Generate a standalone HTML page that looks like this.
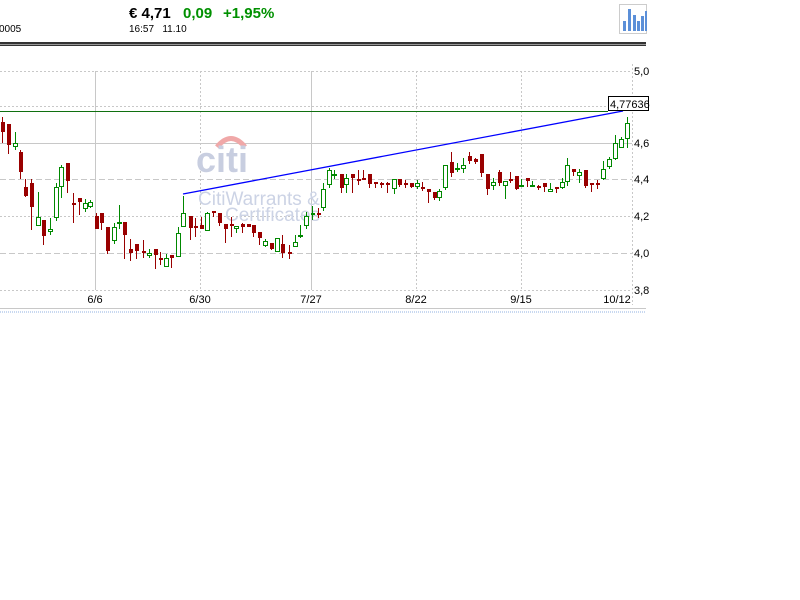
<!DOCTYPE html>
<html><head><meta charset="utf-8">
<style>
body{margin:0;width:800px;height:600px;background:#fff;overflow:hidden;font-family:"Liberation Sans",Arial,sans-serif;}
.t{position:absolute;white-space:nowrap;}
</style></head><body>
<div class="t" style="left:129px;top:5px;font-size:15px;font-weight:bold;color:#000">€ 4,71</div>
<div class="t" style="left:183px;top:5px;font-size:15px;font-weight:bold;color:#009000">0,09</div>
<div class="t" style="left:223px;top:5px;font-size:15px;font-weight:bold;color:#009000">+1,95%</div>
<div class="t" style="left:-1px;top:24px;font-size:10px;color:#000">0005</div>
<div class="t" style="left:129px;top:24px;font-size:10px;color:#000">16:57&nbsp;&nbsp;&nbsp;11.10</div>
<svg id="s" width="800" height="600" style="position:absolute;left:0;top:0" shape-rendering="crispEdges">
<rect x="0" y="42" width="646" height="2" fill="#333"/>
<rect x="0" y="44" width="646" height="1" fill="#999"/>
<rect x="0" y="45" width="646" height="1" fill="#333"/>
<rect x="619.5" y="4.5" width="27" height="29" fill="#fff" stroke="#ccc"/>
<g fill="#5b8fd8">
<rect x="623" y="21" width="3" height="10"/><rect x="628" y="9" width="3" height="22"/><rect x="633" y="15" width="3" height="16"/><rect x="637" y="21" width="3" height="10"/><rect x="641" y="16" width="3" height="15"/><rect x="645" y="11" width="2" height="20"/>
</g>
<g stroke="#c8c8c8" stroke-width="1" fill="none">
<line x1="0" y1="71.5" x2="632" y2="71.5" stroke-dasharray="2,2"/>
<line x1="0" y1="106.5" x2="632" y2="106.5" stroke-dasharray="2,2"/>
<line x1="0" y1="143.5" x2="632" y2="143.5"/>
<line x1="0" y1="179.5" x2="632" y2="179.5" stroke-dasharray="6,3"/>
<line x1="0" y1="216.5" x2="632" y2="216.5" stroke-dasharray="2,2"/>
<line x1="0" y1="253.5" x2="632" y2="253.5" stroke-dasharray="6,3"/>
<line x1="0" y1="290.5" x2="632" y2="290.5" stroke-dasharray="2,2"/>
<line x1="95.5" y1="71" x2="95.5" y2="290"/>
<line x1="200.5" y1="71" x2="200.5" y2="290" stroke-dasharray="2,2"/>
<line x1="311.5" y1="71" x2="311.5" y2="290"/>
<line x1="416.5" y1="71" x2="416.5" y2="290" stroke-dasharray="2,2"/>
<line x1="521.5" y1="71" x2="521.5" y2="290" stroke-dasharray="2,2"/>
<line x1="632.5" y1="64" x2="632.5" y2="305" stroke-dasharray="2,2"/>
<line x1="0" y1="308.5" x2="646" y2="308.5" stroke="#c8c8c8"/>
<line x1="0" y1="311.5" x2="646" y2="311.5" stroke="#c8d8f0" stroke-dasharray="1,1"/>
<line x1="0" y1="312.5" x2="646" y2="312.5" stroke="#c8d8f0" stroke-dasharray="1,1"/>
</g>
<g font-size="11" fill="#000" font-family="Liberation Sans,sans-serif">
<text x="634" y="75">5,0</text><text x="634" y="147">4,6</text><text x="634" y="183">4,4</text><text x="634" y="220">4,2</text><text x="634" y="257">4,0</text><text x="634" y="294">3,8</text>
<text x="95" y="303" text-anchor="middle">6/6</text><text x="200" y="303" text-anchor="middle">6/30</text><text x="311" y="303" text-anchor="middle">7/27</text><text x="416" y="303" text-anchor="middle">8/22</text><text x="521" y="303" text-anchor="middle">9/15</text><text x="617" y="303" text-anchor="middle">10/12</text>
</g>
<path d="M217 147 Q231 130 245 147" stroke="#f0a8a8" stroke-width="5" fill="none" shape-rendering="auto"/>
<text x="196" y="172" font-size="36" font-weight="bold" fill="#c8cee0" font-family="Liberation Sans,sans-serif">citi</text>
<text x="198" y="205" font-size="19" fill="#ccd3e5" font-family="Liberation Sans,sans-serif">CitiWarrants &amp;</text>
<text x="225" y="221" font-size="19" fill="#ccd3e5" font-family="Liberation Sans,sans-serif">Certificates</text>
<g id="c"></g>
<line x1="0" y1="111.5" x2="608" y2="111.5" stroke="#107010"/>
<line x1="183" y1="194" x2="623" y2="111" stroke="#0000ff" stroke-width="1.3" shape-rendering="auto"/>
<rect x="608.5" y="96.5" width="40" height="14" fill="#fff" stroke="#000"/>
<text x="610" y="108" font-size="11" font-family="Liberation Sans,sans-serif">4,77636</text>
</svg>
<script>
var d=[
[2,122,132,117,143,'r'],[8,124,145,124,154,'r'],[15,147,143,132,150,'g'],[20,152,172,150,179,'r'],[25,187,196,179,197,'r'],[31,183,207,179,230,'r'],[38,226,217,192,226,'g'],[43,220,236,220,245,'r'],[50,232,229,218,235,'g'],[56,218,187,183,221,'g'],[61,187,167,165,198,'g'],[67,163,181,163,193,'r'],[73,203,204,193,223,'r'],[79,198,202,198,215,'r'],[85,209,203,199,212,'g'],[90,207,202,200,208,'g'],[96,216,229,213,229,'r'],[101,213,223,213,230,'r'],[107,227,251,227,254,'r'],[114,241,227,223,244,'g'],[119,224,222,205,229,'g'],[124,222,235,222,259,'r'],[130,249,253,239,261,'r'],[136,244,251,244,259,'r'],[143,251,253,240,258,'r'],[149,256,253,249,258,'g'],[155,249,255,249,269,'r'],[160,258,259,252,265,'r'],[166,267,258,254,267,'g'],[171,255,258,255,268,'r'],[178,257,233,227,257,'g'],[183,227,213,196,227,'g'],[190,216,228,216,240,'r'],[195,226,227,218,237,'r'],[201,225,229,217,229,'r'],[207,231,213,212,231,'g'],[213,211,212,211,217,'r'],[219,213,223,213,226,'r'],[225,224,229,224,243,'r'],[231,224,225,217,237,'r'],[236,229,226,226,233,'g'],[242,224,227,223,233,'r'],[248,224,227,224,227,'r'],[253,225,233,225,237,'r'],[259,232,238,232,245,'r'],[265,246,241,239,247,'g'],[271,243,249,243,250,'r'],[277,252,238,238,252,'g'],[282,244,253,235,258,'r'],[289,252,253,245,259,'r'],[295,247,242,235,247,'g'],[300,237,235,225,238,'g'],[306,226,216,212,229,'g'],[312,213,214,206,220,'g'],[318,213,215,208,218,'r'],[323,208,189,183,211,'g'],[329,185,170,168,188,'g'],[334,176,174,170,179,'g'],[341,174,188,174,193,'r'],[346,185,178,174,193,'g'],[352,174,178,174,193,'r'],[358,179,180,170,185,'r'],[363,178,179,170,179,'r'],[369,174,184,174,188,'r'],[375,182,183,182,188,'r'],[381,183,184,182,188,'r'],[387,183,184,182,193,'r'],[394,189,179,179,194,'g'],[399,179,185,179,187,'r'],[405,183,185,180,188,'r'],[411,183,187,183,188,'r'],[417,187,183,180,189,'g'],[422,187,188,182,191,'r'],[428,189,192,189,203,'r'],[434,192,198,192,200,'r'],[439,198,191,189,201,'g'],[445,188,165,165,190,'g'],[451,162,173,152,177,'r'],[457,170,168,163,172,'g'],[463,169,165,158,173,'g'],[469,156,161,152,164,'r'],[475,159,162,158,164,'r'],[481,154,173,154,177,'r'],[487,174,189,174,195,'r'],[493,186,182,178,190,'g'],[499,172,183,170,186,'r'],[505,186,181,181,199,'g'],[510,179,180,172,183,'r'],[516,176,189,176,190,'r'],[521,187,185,179,187,'g'],[527,178,181,178,187,'r'],[532,187,185,181,187,'g'],[538,186,188,185,190,'r'],[544,183,187,183,192,'r'],[550,192,189,183,192,'g'],[556,187,188,187,193,'r'],[562,188,182,178,189,'g'],[567,182,165,158,186,'g'],[573,169,172,169,176,'r'],[579,176,172,169,183,'g'],[585,170,186,170,188,'r'],[591,183,185,183,192,'r'],[597,183,184,180,189,'r'],[603,179,169,161,180,'g'],[609,167,159,157,169,'g'],[615,159,143,135,160,'g'],[621,148,139,137,148,'g'],[627,139,123,117,148,'g']];
var s='';
d.forEach(function(c){var x=c[0],col=c[5]=='r'?'#990000':'#008800';
var t=Math.min(c[1],c[2]),b=Math.max(c[1],c[2]);
s+='<rect x="'+x+'" y="'+c[3]+'" width="1" height="'+(c[4]-c[3])+'" fill="'+col+'"/>';
if(b-t<2){s+='<rect x="'+(x-1)+'" y="'+t+'" width="4" height="2" fill="'+col+'"/>';}
else if(c[5]=='r'){s+='<rect x="'+(x-1)+'" y="'+t+'" width="4" height="'+(b-t)+'" fill="'+col+'"/>';}
else{s+='<rect x="'+(x-2)+'" y="'+t+'" width="5" height="'+(b-t)+'" fill="'+col+'"/><rect x="'+(x-1)+'" y="'+(t+1)+'" width="3" height="'+(b-t-2)+'" fill="#fff"/>';}
});
document.getElementById('c').innerHTML=s;
</script>
</body></html>
